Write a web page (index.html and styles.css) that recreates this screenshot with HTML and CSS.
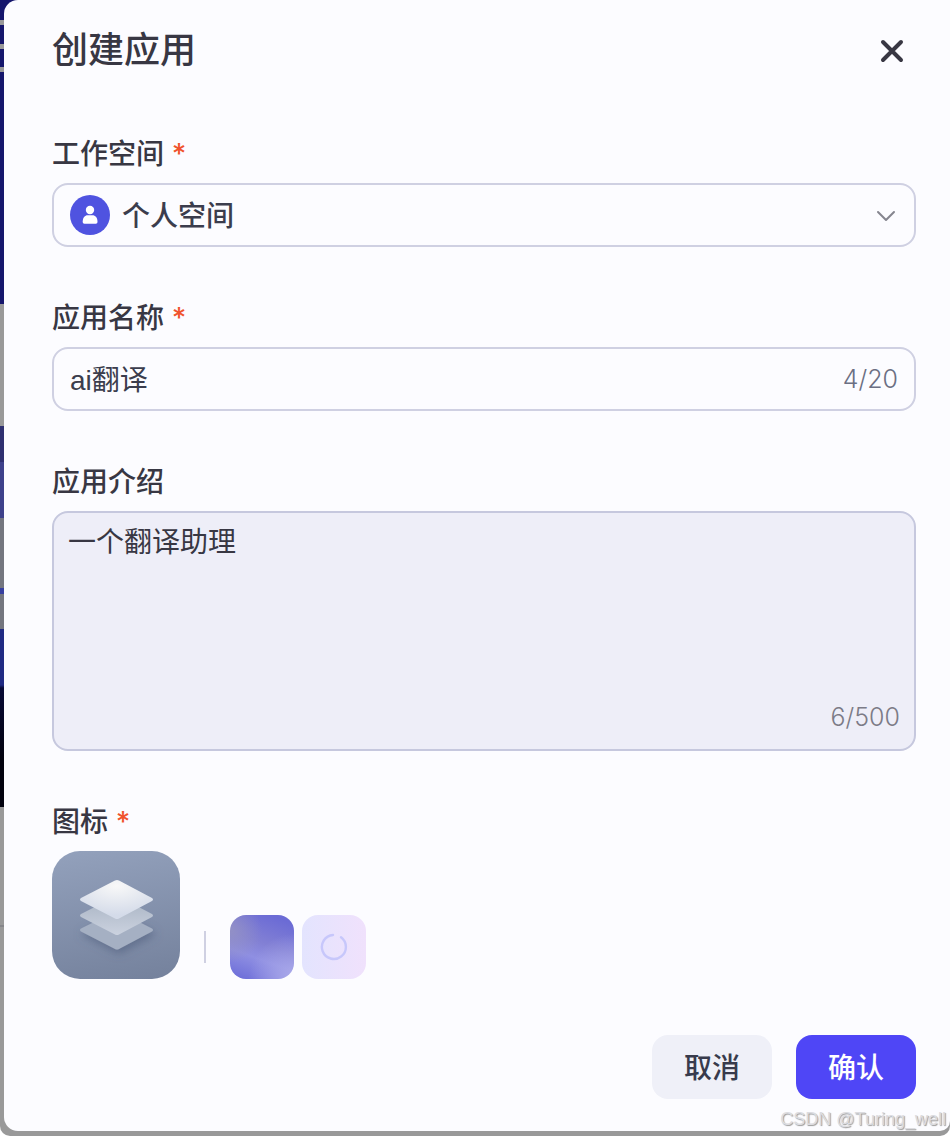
FILE: index.html
```html
<!DOCTYPE html>
<html lang="zh-CN">
<head>
<meta charset="utf-8">
<meta name="viewport" content="width=device-width, initial-scale=1">
<title>创建应用</title>
<link rel="stylesheet" href="styles.css">
</head>
<body>
<div class="backdrop">
  <form class="dialog" role="dialog" aria-labelledby="dialog-title">
    <header class="header">
      <h1 class="title" id="dialog-title">创建应用</h1>
      <button class="close" type="button" aria-label="关闭">
        <svg width="24" height="24" viewBox="0 0 24 24" fill="none" stroke="currentColor" stroke-width="4" stroke-linecap="round"><path d="M3 3l18 18M21 3L3 21"/></svg>
      </button>
    </header>

    <div class="fields">
      <div class="field">
        <label class="label" for="space">工作空间 <span class="required">*</span></label>
        <div class="control">
          <svg class="avatar" viewBox="0 0 40 40"><circle cx="20" cy="20" r="20" fill="#4f53e0"/><circle cx="20" cy="15" r="4.2" fill="#fff"/><path d="M12.7 26.5c0-4 2.2-6.3 5-6.3h4.800c2.800 0 5 2.300 5 6.300 0 1.500-.6 2.200-1.700 2.200H14.400c-1.100 0-1.700-.7-1.700-2.200z" fill="#fff"/></svg>
          <select class="box select" id="space"><option>个人空间</option></select>
          <svg class="chevron" viewBox="0 0 20 12" fill="none" stroke="currentColor" stroke-width="2" stroke-linecap="round" stroke-linejoin="round"><path d="M2 2l8 8 8-8"/></svg>
        </div>
      </div>

      <div class="field">
        <label class="label" for="name">应用名称 <span class="required">*</span></label>
        <div class="control">
          <input class="box input" id="name" type="text" maxlength="20" value="ai翻译">
          <span class="count count-name">4/20</span>
        </div>
      </div>

      <div class="field">
        <label class="label" for="intro">应用介绍</label>
        <div class="control">
          <textarea class="box textarea" id="intro" maxlength="500">一个翻译助理</textarea>
          <span class="count count-intro">6/500</span>
        </div>
      </div>

      <div class="field" role="group" aria-labelledby="icon-label">
        <span class="label" id="icon-label">图标 <span class="required">*</span></span>
        <div class="icons">
          <button class="icon-current" type="button" aria-label="更换图标">
            <svg viewBox="0 0 128 128">
              <defs>
                <radialGradient id="top" cx=".5" cy=".15" r=".75"><stop offset="0" stop-color="#f8f8f8"/><stop offset="1" stop-color="#d4dbe9"/></radialGradient>
                <linearGradient id="mid" x1="0" y1="0" x2="0" y2="1"><stop offset="0.3" stop-color="#b2bccb"/><stop offset="1" stop-color="#cbd2df"/></linearGradient>
                <filter id="shade" x="-30%" y="-30%" width="160%" height="180%"><feDropShadow dx="2" dy="4" stdDeviation="4" flood-color="#4f5d7c" flood-opacity=".6"/></filter>
              </defs>
              <path filter="url(#shade)" fill="#a5b0c3" d="M63 60.700q2-1 4 0L100 77.500q2 1.500 0 3L67 98q-2 1-4 0L29 80.500q-2-1.500 0-3z"/>
              <path fill="url(#mid)" d="M63 45.700q2-1 4 0L100 63q2 1.500 0 3L67 83.500q-2 1-4 0L29 66q-2-1.500 0-3z"/>
              <path fill="url(#top)" d="M63 29.500q2-1 4 0L100 47q2 1.500 0 3L67 67.500q-2 1-4 0L29 50q-2-1.500 0-3z"/>
            </svg>
          </button>
          <span class="divider"></span>
          <div class="choices">
            <button class="choice choice-color" type="button" aria-label="渐变图标"></button>
            <button class="choice choice-loading" type="button" aria-label="生成图标">
              <svg width="28" height="28" viewBox="0 0 28 28" fill="none" stroke="#c7c7fb" stroke-width="2.400" stroke-linecap="round"><path d="M13 2a12 12 0 1 0 8 2.300"/></svg>
            </button>
          </div>
        </div>
      </div>
    </div>

    <footer class="footer">
      <button class="button cancel" type="button">取消</button>
      <button class="button confirm" type="submit">确认</button>
    </footer>
  </form>
  <span class="watermark">CSDN @Turing_well</span>
</div>
</body>
</html>
```
FILE: styles.css
```css
* {
  box-sizing: border-box;
}

body {
  margin: 0;
  background: #fff;
  color: #383743;
  font-family: "Liberation Sans", "Noto Sans CJK SC", sans-serif;
  font-size: 28px;
}

button,
input,
select,
textarea {
  font: inherit;
  color: inherit;
}

button {
  border: 0;
  padding: 0;
  cursor: pointer;
}

.backdrop {
  position: relative;
  min-height: 100vh;
  padding: 0 0 5px 4px;
  border-radius: 0 0 10px 10px;
  overflow: hidden;
  background:
    linear-gradient(
      #15166c 0 20px, #999 20px 25px, #15166c 25px 44px, #999 44px 49px,
      #15166c 49px 67px, #999 67px 72px, #15166c 72px 304px,
      #999 304px 426px, #2f3070 426px 462px, #3e418b 462px 518px,
      #74767f 518px 588px, #3740a0 588px 594px, #74767f 594px 629px,
      #202a83 629px 685px, #080a36 688px, #02020e 760px 807px,
      #999 807px 925px, #86868a 925px 927px, #999 927px
    ) left top / 24px 100% no-repeat #999;
}

.dialog {
  padding: 0 34px 32px 48px;
  border-radius: 14px 0 10px 14px;
  background: #fcfcff;
}

.header {
  display: flex;
  align-items: center;
  justify-content: space-between;
  height: 102px;
  margin-bottom: 31px;
}

.title {
  margin: 0;
  font-size: 36px;
  font-weight: 500;
  line-height: 48px;
}

.close {
  display: grid;
  place-items: center;
  width: 48px;
  height: 48px;
  background: none;
}

.fields {
  display: grid;
  gap: 50px;
}

.field {
  display: grid;
  gap: 10px;
}

.label {
  height: 40px;
  font-weight: 500;
  line-height: 44px;
}

.required {
  color: #f0532d;
  font-family: Inter, sans-serif;
  line-height: 1;
}

.control {
  position: relative;
  display: grid;
}

.box {
  width: 100%;
  height: 64px;
  margin: 0;
  border: 2px solid #cfd0e2;
  border-radius: 16px;
  padding: 0 16px;
  background: none;
  color: #3b3d4d;
  outline: none;
}

.select {
  appearance: none;
  padding-top: 2px;
  padding-left: 68px;
  font-weight: 500;
}

.avatar {
  position: absolute;
  left: 18px;
  top: 12px;
  width: 40px;
  height: 40px;
}

.chevron {
  position: absolute;
  right: 20px;
  top: 27px;
  width: 20px;
  height: 12px;
  color: #85858f;
  pointer-events: none;
}

.input {
  padding-right: 100px;
  padding-bottom: 2px;
}

.textarea {
  display: block;
  height: 240px;
  padding: 10px 14px;
  border-color: #c6c8de;
  background: #eeeef8;
  color: #383743;
  line-height: 40px;
  resize: none;
}

.count {
  position: absolute;
  font-family: Inter, sans-serif;
  font-size: 25px;
  font-weight: 300;
  line-height: 32px;
}

.count-name {
  right: 18px;
  top: 16px;
  color: #6b6f83;
}

.count-intro {
  right: 16px;
  bottom: 18px;
  color: #7c7b87;
}

.icons {
  display: flex;
  align-items: flex-end;
  gap: 24px;
}

.icon-current {
  width: 128px;
  height: 128px;
  border-radius: 28px;
  overflow: hidden;
  background: linear-gradient(170deg, #93a1bc, #74819c);
}

.icon-current svg {
  display: block;
}

.divider {
  width: 2px;
  height: 32px;
  margin-bottom: 16px;
  background: #cfd0e2;
}

.choices {
  display: flex;
  gap: 8px;
}

.choice {
  display: grid;
  place-items: center;
  width: 64px;
  height: 64px;
  border-radius: 16px;
}

.choice-color {
  background:
    radial-gradient(circle at 100% 100%, #abaaea, transparent 50%),
    radial-gradient(circle at 0 25%, #9290c6, transparent 40%),
    linear-gradient(200deg, #6b6bd5 10%, #8280d4 45%, #8f8fe2 65%, #6b6cd8 98%);
}

.choice-loading {
  background: linear-gradient(90deg, #e3e4fe, #f0e1fc);
}

.footer {
  display: flex;
  justify-content: flex-end;
  gap: 24px;
  margin-top: 56px;
}

.button {
  width: 120px;
  height: 64px;
  padding-bottom: 2px;
  border-radius: 16px;
  font-weight: 500;
}

.cancel {
  background: #eff0f8;
  color: #383b4c;
}

.confirm {
  background: #4f46f6;
  color: #fff;
}

.watermark {
  position: absolute;
  right: 4px;
  bottom: 6px;
  color: #dcdce0;
  font-size: 18px;
  line-height: 22px;
  text-shadow: 1px 1px 1px #999;
}
```
